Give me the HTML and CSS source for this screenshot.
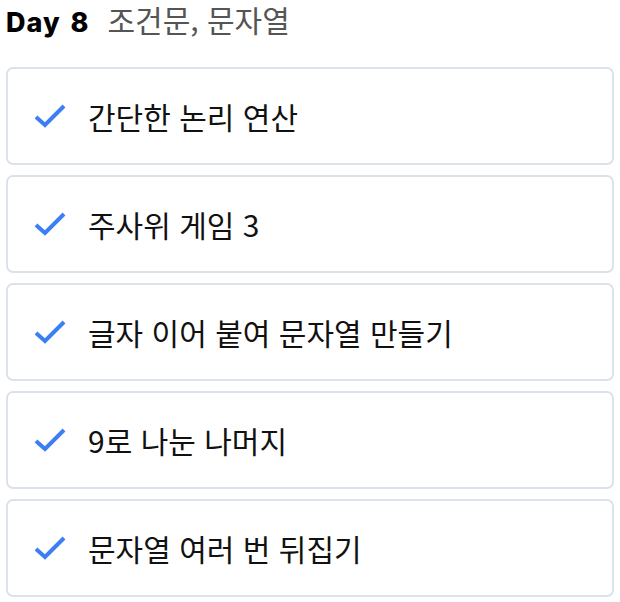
FILE: index.html
```html
<!DOCTYPE html>
<html lang="ko">
<head>
<meta charset="utf-8">
<link rel="stylesheet" href="styles.css">
</head>
<body>
<div class="page">
  <h2 class="heading"><span class="day">Day 8</span><span class="topic">조건문, 문자열</span></h2>
  <ul class="list">
    <li class="card"><svg class="check" viewBox="0 0 32 24" width="32" height="24"><path d="M2 13 L11 21 L30 2" /></svg><span class="label">간단한 논리 연산</span></li>
    <li class="card"><svg class="check" viewBox="0 0 32 24" width="32" height="24"><path d="M2 13 L11 21 L30 2" /></svg><span class="label">주사위 게임 3</span></li>
    <li class="card"><svg class="check" viewBox="0 0 32 24" width="32" height="24"><path d="M2 13 L11 21 L30 2" /></svg><span class="label">글자 이어 붙여 문자열 만들기</span></li>
    <li class="card"><svg class="check" viewBox="0 0 32 24" width="32" height="24"><path d="M2 13 L11 21 L30 2" /></svg><span class="label">9로 나눈 나머지</span></li>
    <li class="card"><svg class="check" viewBox="0 0 32 24" width="32" height="24"><path d="M2 13 L11 21 L30 2" /></svg><span class="label">문자열 여러 번 뒤집기</span></li>
  </ul>
</div>
</body>
</html>
```
FILE: styles.css
```css
* { box-sizing: border-box; }
body {
  margin: 0;
  background: #ffffff;
  font-family: Inter, "Noto Sans CJK KR", sans-serif;
}
.page {
  padding: 0 6px;
}
.heading {
  margin: 0 0 29px;
  height: 38px;
  display: flex;
  align-items: baseline;
  gap: 18px;
  line-height: 38px;
}
.day {
  font-size: 27px;
  font-weight: 800;
  color: #000000;
  letter-spacing: 1px;
  word-spacing: 3px;
}
.topic {
  font-family: "Noto Sans CJK KR", sans-serif;
  font-size: 30px;
  font-weight: 400;
  color: #555555;
}
.list {
  list-style: none;
  margin: 0;
  padding: 0;
  display: flex;
  flex-direction: column;
  gap: 10px;
}
.card {
  height: 98px;
  border: 2px solid #dbe2ea;
  border-radius: 7px;
  display: flex;
  align-items: center;
  padding-left: 26px;
  gap: 22px;
}
.check {
  flex: none;
  fill: none;
  stroke: #3b7ff2;
  stroke-width: 4;
  stroke-linecap: butt;
  stroke-linejoin: miter;
}
.label {
  font-family: "Noto Sans CJK KR", sans-serif;
  font-size: 30px;
  color: #111111;
  line-height: 40px;
}
```
